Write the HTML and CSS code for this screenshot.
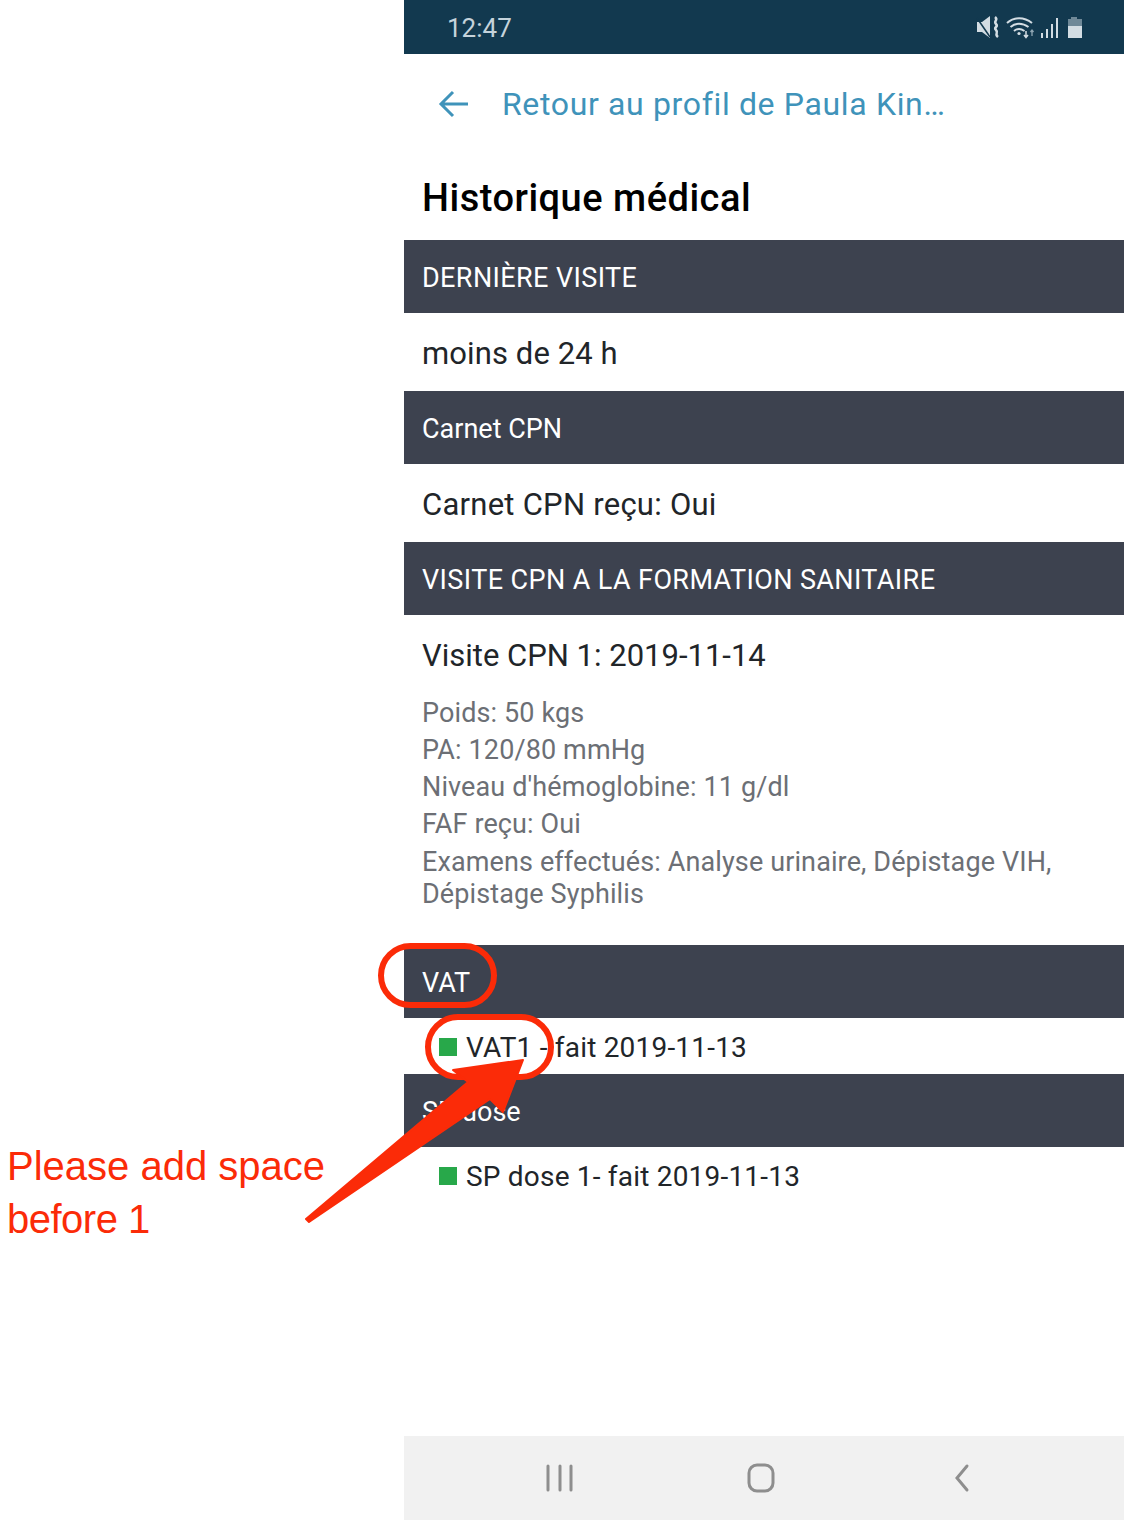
FILE: index.html
```html
<!DOCTYPE html>
<html lang="fr">
<head>
    <meta charset="UTF-8">
    <meta name="viewport" content="width=device-width, initial-scale=1.0">
    <title>Historique médical</title>
    <link rel="stylesheet" href="styles.css">
</head>
<body>
    <div class="phone">
        <div class="status-bar">
            <span class="clock">12:47</span>
            <svg class="status-icons" width="110" height="24" viewBox="0 0 110 24">
                <!-- mute -->
                <path d="M2 6h5l8-6v22l-8-6H2z" fill="#d3dde3"/>
                <path d="M2 2l13 19" stroke="#12394f" stroke-width="1.500"/>
                <path d="M20 1c4 3-2 4 1 7s-3 3 0 6-2 4 2 7" fill="none" stroke="#d3dde3" stroke-width="2.500"/>
                <!-- wifi -->
                <path d="M32 7c7-6.500 17-6.500 25 0M35.500 11c5-4.500 12-4.500 18 0M39 15c3-2.500 7-2.500 10.500 0" fill="none" stroke="#d3dde3" stroke-width="2"/>
                <circle cx="44" cy="17.500" r="1.600" fill="#d3dde3"/>
                <path d="M51 15v6M49 19l2 2.500 2-2.500" fill="none" stroke="#d3dde3" stroke-width="1.500"/>
                <path d="M57 20v-6M55.500 16l1.500-2 1.500 2" fill="none" stroke="#8fa6b3" stroke-width="1.300"/>
                <!-- signal -->
                <path d="M67 17v5M72 13v9M77 8v14M82 2v20" stroke="#d3dde3" stroke-width="2"/>
                <!-- battery -->
                <path d="M96 1h6v3h-6zM93 3h14v7H93z" fill="#6f8998"/>
                <path d="M93 10h14v12H93z" fill="#d3dde3"/>
            </svg>
        </div>

        <div class="back-row">
            <svg class="back-arrow" width="32" height="32" viewBox="0 0 32 32">
                <path d="M30 16H4M15 4L3 16l12 12" fill="none" stroke="#3f93ba" stroke-width="3"/>
            </svg>
            <span class="back-link">Retour au profil de Paula Kin…</span>
        </div>

        <h1 class="page-title">Historique médical</h1>

        <div class="section-head caps">DERNIÈRE VISITE</div>
        <div class="section-body">moins de 24 h</div>

        <div class="section-head">Carnet CPN</div>
        <div class="section-body wide">Carnet CPN reçu: Oui</div>

        <div class="section-head caps">VISITE CPN A LA FORMATION SANITAIRE</div>
        <div class="visit">
            <div class="visit-title">Visite CPN 1: 2019-11-14</div>
            <div class="visit-line">Poids: 50 kgs</div>
            <div class="visit-line">PA: 120/80 mmHg</div>
            <div class="visit-line">Niveau d'hémoglobine: 11 g/dl</div>
            <div class="visit-line">FAF reçu: Oui</div>
            <div class="visit-line visit-wrap">Examens effectués: Analyse urinaire, Dépistage VIH, Dépistage Syphilis</div>
        </div>

        <div class="section-head">VAT</div>
        <div class="dose-row"><i class="dot"></i>VAT1 - fait 2019-11-13</div>

        <div class="section-head">SP dose</div>
        <div class="dose-row dose-last"><i class="dot"></i>SP dose 1- fait 2019-11-13</div>

        <div class="nav-bar">
            <svg width="30" height="30" viewBox="0 0 30 30">
                <path d="M3 3v24M15 3v24M26 3v24" stroke="#8e8e8e" stroke-width="3" stroke-linecap="round"/>
            </svg>
            <svg width="30" height="30" viewBox="0 0 30 30">
                <rect x="3" y="2" width="24" height="26" rx="8" fill="none" stroke="#8e8e8e" stroke-width="3"/>
            </svg>
            <svg width="30" height="30" viewBox="0 0 30 30">
                <path d="M20 3L10 15l10 12" fill="none" stroke="#8e8e8e" stroke-width="3" stroke-linecap="round"/>
            </svg>
        </div>
    </div>

    <!-- annotation drawn on top of the screenshot -->
    <svg class="markup" width="1124" height="1520" viewBox="0 0 1124 1520">
        <rect x="381" y="946" width="113" height="59" rx="29.500" fill="none" stroke="#fb2b08" stroke-width="6"/>
        <rect x="428" y="1017" width="123" height="60" rx="30" fill="none" stroke="#fb2b08" stroke-width="6"/>
        <path d="M306 1219L468 1082 453 1070 523 1060 503 1112 490 1099 309 1222z" fill="#fb2b08" stroke="#fb2b08" stroke-width="2" stroke-linejoin="round"/>
    </svg>
    <div class="note">Please add space<br><span class="note-short">before 1</span></div>
</body>
</html>
```

FILE: styles.css
```css
* {
    box-sizing: border-box;
}

body {
    margin: 0;
    background: white;
    font-family: Roboto, sans-serif;
    color: #212529;
}

.phone {
    width: 720px;
    height: 1520px;
    margin-left: 404px;
    display: flex;
    flex-direction: column;
    background: white;
}

.status-bar {
    height: 54px;
    flex: none;
    background: #12394f;
    display: flex;
    align-items: center;
    justify-content: space-between;
    padding: 2px 39px 0 43px;
}

.clock {
    font-size: 26px;
    color: #c5d3db;
}

.status-icons {
    display: block;
}

.back-row {
    height: 100px;
    flex: none;
    display: flex;
    align-items: center;
    padding-left: 34px;
    gap: 32px;
}

.back-link {
    font-size: 32px;
    letter-spacing: 0.65px;
    color: #3f93ba;
}

.page-title {
    height: 86px;
    flex: none;
    margin: 0;
    padding: 21px 0 0 18px;
    font-size: 38px;
    line-height: 46px;
    font-weight: 500;
    letter-spacing: 0.5px;
    color: #000;
}

.section-head {
    height: 73px;
    flex: none;
    padding: 2px 18px 0;
    display: flex;
    align-items: center;
    background: #3d424f;
    color: white;
    font-size: 27px;
}

.caps {
    letter-spacing: 0.4px;
}

.section-body {
    height: 78px;
    flex: none;
    padding: 2px 18px 0;
    display: flex;
    align-items: center;
    font-size: 31px;
    letter-spacing: 0.1px;
}

.wide {
    letter-spacing: 0.25px;
}

.visit {
    height: 330px;
    flex: none;
    padding: 22px 18px 0;
}

.visit-title {
    font-size: 31px;
    line-height: 38px;
    margin-bottom: 20px;
}

.visit-line {
    font-size: 27px;
    line-height: 37px;
    letter-spacing: 0.12px;
    color: #6c6f75;
}

.visit-wrap {
    line-height: 32px;
    padding-top: 3px;
}

.dose-row {
    height: 56px;
    flex: none;
    display: flex;
    align-items: center;
    padding: 2px 0 0 35px;
    font-size: 28px;
    letter-spacing: 0.2px;
}

.dose-last {
    height: 58px;
    padding-top: 0;
}

.dot {
    width: 18px;
    height: 18px;
    background: #28a84a;
    margin-right: 9px;
}

.nav-bar {
    height: 84px;
    margin-top: auto;
    flex: none;
    background: #f1f1f1;
    display: flex;
    align-items: center;
    padding: 0 147px 0 141px;
    justify-content: space-between;
}

.markup {
    position: absolute;
    left: 0;
    top: 0;
}

.note {
    position: absolute;
    left: 7px;
    top: 1140px;
    font-family: "Liberation Sans", sans-serif;
    font-size: 40px;
    line-height: 53px;
    color: #fb2b08;
}

.note-short {
    letter-spacing: -0.5px;
}
```
